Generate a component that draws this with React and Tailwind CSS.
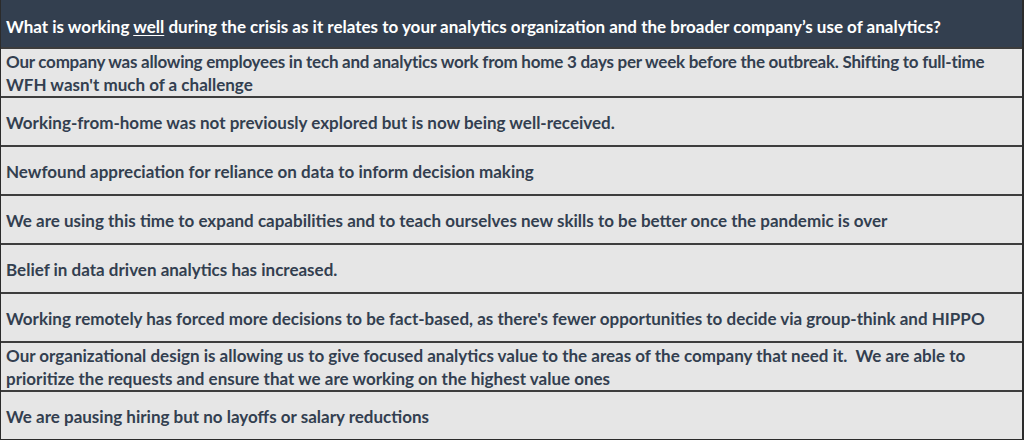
import React from 'react';

const rows = [
    ["Our company was allowing employees in tech and analytics work from home 3 days per week before the outbreak. Shifting to full-time", "WFH wasn't much of a challenge"],
    ["Working-from-home was not previously explored but is now being well-received."],
    ["Newfound appreciation for reliance on data to inform decision making"],
    ["We are using this time to expand capabilities and to teach ourselves new skills to be better once the pandemic is over"],
    ["Belief in data driven analytics has increased."],
    ["Working remotely has forced more decisions to be fact-based, as there's fewer opportunities to decide via group-think and HIPPO"],
    ["Our organizational design is allowing us to give focused analytics value to the areas of the company that need it.  We are able to", "prioritize the requests and ensure that we are working on the highest value ones"],
    ["We are pausing hiring but no layoffs or salary reductions"],
];

const App = () => {
    return (
        <div className="w-[1024px] h-[440px] bg-white font-['Lato','Liberation_Sans',sans-serif]">
            <div className="border-l border-r-2 border-b border-[#2b2b2b]">
                <div className="h-[47px] bg-[#333f4f] flex items-center pt-[6px] px-[5px] text-white font-bold text-[17px]">
                    <p>
                        What is working <span className="underline underline-offset-2">well</span> during the crisis as it relates to your analytics organization and the broader company’s use of analytics?
                    </p>
                </div>
                {rows.map((lines, i) => (
                    <div
                        key={i}
                        className="h-[49px] bg-[#e6e6e6] border-t-2 border-[#3d3d3d] flex flex-col justify-center pt-[1px] px-[5px] text-[#333f50] font-bold text-[17px] leading-[23px] whitespace-pre"
                    >
                        {lines.map((line, j) => (
                            <p key={j} className={j === 0 && lines.length > 1 && i === 0 ? 'tracking-[-0.25px]' : ''}>{line}</p>
                        ))}
                    </div>
                ))}
            </div>
        </div>
    );
};

export default App;
